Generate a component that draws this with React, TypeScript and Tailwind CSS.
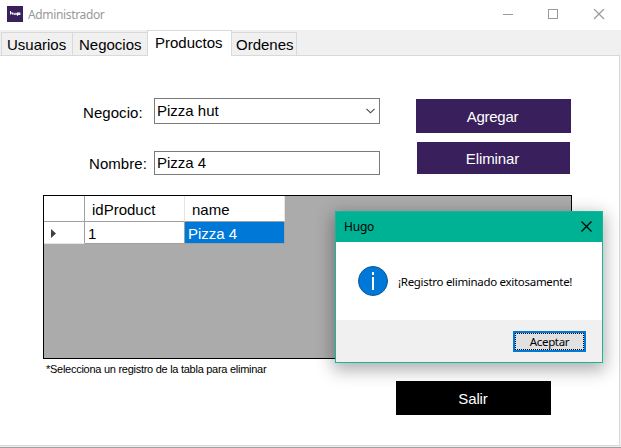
import React from "react";

const sans = "font-['Liberation_Sans',Arial,sans-serif]";
const ui = "font-['Noto_Sans','Open_Sans',sans-serif]";

function TitleBar() {
  return (
    <header className="flex h-[30px] shrink-0 items-start bg-white">
      <div className="ml-[7px] mt-[6px] flex size-4 items-center justify-center bg-[#391f5b]">
        <svg width="12" height="6" viewBox="0 0 12 6" fill="none" stroke="#fff" strokeWidth="1.1">
          <path d="M1.5 0v3.5M1.5 2h2v1.5M5 1.8v1.5h2V1.8M7 3h1.5v1.8M8 2h2.8v1.4H8.6" />
        </svg>
      </div>
      <span className={`${ui} ml-[5px] mt-[6px] text-[12px] leading-[18px] tracking-[-0.35px] text-[#999]`}>
        Administrador
      </span>
      <svg className="ml-auto mr-[16px] mt-[9px]" width="102" height="11" fill="none" stroke="#999" shapeRendering="crispEdges">
        <path d="M0 5.5h10" />
        <rect x="45.5" y="0.5" width="9" height="9" />
        <path d="M91 0l10 10M101 0L91 10" strokeWidth="1.2" shapeRendering="auto" />
      </svg>
    </header>
  );
}

function Tabs() {
  return (
    <nav className="flex h-[26px] shrink-0 items-end bg-[#f0f0f0] text-[15px] leading-[24px]">
      <div className="h-px w-px bg-[#d9d9d9]" />
      <div className="h-6 w-[71px] border border-r-0 border-[#d9d9d9] pl-[5px]">Usuarios</div>
      <div className="h-6 w-[75px] border border-r-0 border-[#d9d9d9] pl-[6px]">Negocios</div>
      <div className="h-[26px] w-[85px] border border-b-0 border-[#d9d9d9] bg-white pl-[7px]">Productos</div>
      <div className="h-6 w-[65px] border border-l-0 border-[#d9d9d9] pl-[4px]">Ordenes</div>
      <div className="mr-px h-px grow bg-[#d9d9d9]" />
    </nav>
  );
}

function Form() {
  return (
    <div className="flex h-[77px]">
      <div className="mt-[-1px] flex w-[337px] flex-col gap-[27px]">
        <div className="flex h-[26px]">
          <span className="w-[111px] pl-[40px] pt-[6px] text-[15px] leading-[17px] tracking-[0.06px]">Negocio:</span>
          <div className="flex w-[226px] items-center justify-between border border-[#7a7a7a] pl-[2px] pr-[4px] text-[15px]">
            <span>Pizza hut</span>
            <svg width="9" height="6" fill="none" stroke="#444" strokeWidth="1.1">
              <path d="M0.5 0.8l4 4 4-4" />
            </svg>
          </div>
        </div>
        <div className="flex h-6">
          <span className="w-[111px] pl-[46px] pt-[4px] text-[15px] leading-[17px] tracking-[0.06px]">Nombre:</span>
          <div className="flex w-[226px] items-center border border-[#7a7a7a] pl-[2px] pt-px text-[15px]">Pizza 4</div>
        </div>
      </div>
      <div className="ml-[36px] flex flex-col items-center gap-[9px] text-[15px] text-white">
        <button className="h-[34px] w-[155px] bg-[#391f5b] pr-[2px] pt-[2px] tracking-[-0.25px]">Agregar</button>
        <button className="h-[32px] w-[153px] bg-[#391f5b] pr-[2px] pt-[2px] tracking-[-0.1px]">Eliminar</button>
      </div>
    </div>
  );
}

function DataGrid() {
  return (
    <div className="mt-[19px] h-[164px] w-[529px] border border-black bg-[#ababab]">
      <div className="grid w-[241px] grid-cols-[41px_100px_100px] grid-rows-[26px_22px] text-[15px] leading-[18px]">
        <div className="border-b border-r border-[#a0a0a0] bg-white" />
        <div className="border-b border-r border-b-[#a0a0a0] border-r-[#e5e5e5] bg-white pl-[7px] pt-[5px]">idProduct</div>
        <div className="border-b border-r border-b-[#a0a0a0] border-r-[#e5e5e5] bg-white pl-[7px] pt-[5px]">name</div>
        <div className="flex items-center border-b border-r border-b-[#e5e5e5] border-r-[#a0a0a0] bg-white pl-[7px] pt-px">
          <svg width="5" height="9" fill="#404040">
            <path d="M0 0l5 4.5-5 4.5z" />
          </svg>
        </div>
        <div className="border-b border-r border-[#a0a0a0] bg-white pl-[3px] pt-[3px]">1</div>
        <div className="border-b border-r border-[#a0a0a0] bg-[#0078d7] pl-[3px] pt-[3px] text-white">Pizza 4</div>
      </div>
    </div>
  );
}

function Dialog() {
  return (
    <section className={`${ui} absolute left-[335px] top-[211px] flex h-[152px] w-[268px] flex-col border border-[#18b59c] bg-white text-black shadow-[0_5px_16px_2px_rgba(0,0,0,0.32)]`}>
      <div className="flex h-[30px] items-start justify-between bg-[#00b294] pl-[8px] pr-[10px]">
        <span className="pt-[6px] text-[12px] leading-[18px] tracking-[-0.2px]">Hugo</span>
        <svg className="mt-[9px]" width="11" height="11" fill="none" stroke="#000" strokeWidth="1.2">
          <path d="M0.5 0.5l10 10M10.5 0.5l-10 10" />
        </svg>
      </div>
      <div className="flex h-[78px] items-center pl-[22px]">
        <svg width="30" height="30">
          <circle cx="15" cy="15" r="14.5" fill="#0078d7" stroke="#08579b" />
          <path d="M15 6v3M15 11v13" stroke="#fff" strokeWidth="2" />
        </svg>
        <span className="ml-[10px] mt-[2px] whitespace-nowrap text-[11.5px] tracking-[-0.3px]">¡Registro eliminado exitosamente!</span>
      </div>
      <div className="flex grow justify-end bg-[#f0f0f0] pr-[16px] pt-[11px]">
        <button className="h-[21px] w-[73px] border-2 border-[#0078d7] bg-[#e1e1e1]">
          <span className="flex h-full items-center justify-center border border-dotted border-black text-[11.5px] tracking-[-0.35px]">Aceptar</span>
        </button>
      </div>
    </section>
  );
}

export default function App() {
  return (
    <div className={`${sans} relative flex h-[448px] w-[621px] flex-col overflow-hidden bg-[#f0f0f0] text-black`}>
      <TitleBar />
      <Tabs />
      <main className="mr-px h-[390px] border-b border-r border-[#d9d9d9] bg-white pl-[43px] pt-[43px]">
        <Form />
        <DataGrid />
        <div className="flex">
          <p className="ml-[3px] mt-[3px] w-[350px] text-[11px] leading-[14px] tracking-[-0.27px]">
            *Selecciona un registro de la tabla para eliminar
          </p>
          <button className="mt-[22px] h-[34px] w-[155px] bg-black pr-px pt-[2px] text-[15px] tracking-[-0.1px] text-white">Salir</button>
        </div>
      </main>
      <div className="mt-px h-px bg-[#a0a0a0]" />
      <Dialog />
    </div>
  );
}
